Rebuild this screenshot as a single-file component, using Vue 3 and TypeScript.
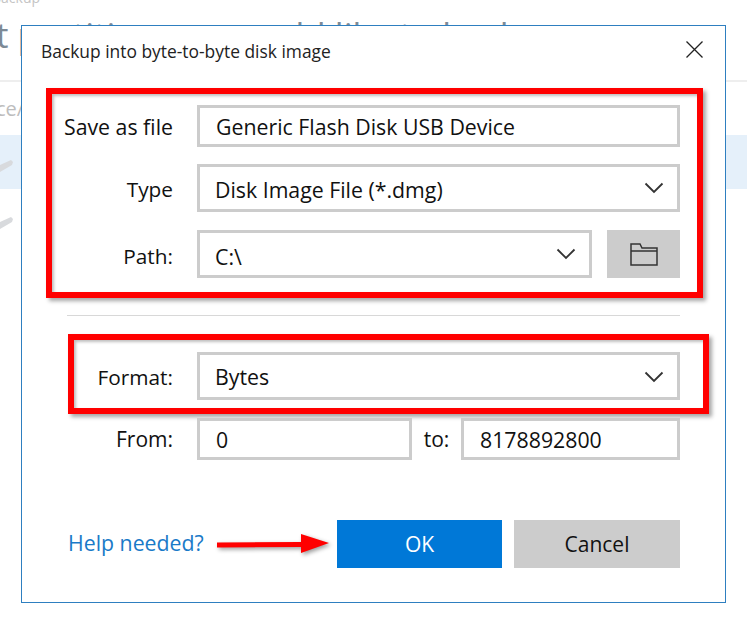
<script setup lang="ts">
const title: string = 'Backup into byte-to-byte disk image'
</script>

<template>
  <div class="page">
    <div class="crumb">Backup</div>
    <div class="heading">t partitions <span class="tight">you</span> would like to back up</div>
    <div class="rule"></div>
    <div class="device">ce/</div>
    <div class="row">
      <svg class="wedge" width="14" height="20" viewBox="0 0 14 20"><path d="M0 13 L11 8 L13 10 L12 13 L0 20 Z" fill="#d8dadd" /></svg>
    </div>
    <div class="row plain">
      <svg class="wedge" width="14" height="20" viewBox="0 0 14 20"><path d="M0 13 L11 8 L13 10 L12 13 L0 20 Z" fill="#d8dadd" /></svg>
    </div>

    <section class="dialog">
      <header class="title-bar">
        <span class="title">{{ title }}</span>
        <svg class="close" width="17" height="17" viewBox="0 0 17 17"><path d="M0.500 0.500 L16.500 16.500 M16.500 0.500 L0.500 16.500" stroke="#222" stroke-width="1.300" fill="none" /></svg>
      </header>

      <div class="callout first">
        <div class="field save">
          <label class="label wide">Save as file</label>
          <div class="input"><span class="indent">Generic Flash Disk USB Device</span></div>
        </div>
        <div class="field type">
          <label class="label">Type</label>
          <div class="input">
            <span class="value">Disk Image File (*.dmg)</span>
            <svg class="chev" width="20" height="12" viewBox="0 0 20 12"><path d="M1.500 1.500 L10 10 L18.500 1.500" stroke="#333" stroke-width="1.800" fill="none" /></svg>
          </div>
        </div>
        <div class="field path">
          <label class="label">Path:</label>
          <div class="input">
            <span class="value">C:\</span>
            <svg class="chev" width="20" height="12" viewBox="0 0 20 12"><path d="M1.500 1.500 L10 10 L18.500 1.500" stroke="#333" stroke-width="1.800" fill="none" /></svg>
          </div>
          <button class="browse">
            <svg width="28" height="23" viewBox="0 0 28 23"><path d="M1 22 V1 H10 L12 5 H27 V22 Z M1 8 H27" stroke="#333" stroke-width="1.500" fill="none" /></svg>
          </button>
        </div>
      </div>

      <div class="separator"></div>

      <div class="callout second">
        <div class="field">
          <label class="label">Format:</label>
          <div class="input">
            <span>Bytes</span>
            <svg class="chev" width="20" height="12" viewBox="0 0 20 12"><path d="M1.500 1.500 L10 10 L18.500 1.500" stroke="#333" stroke-width="1.800" fill="none" /></svg>
          </div>
        </div>
      </div>

      <div class="range">
        <label class="label">From:</label>
        <div class="input from"><span class="indent">0</span></div>
        <label class="to">to:</label>
        <div class="input until"><span class="indent">8178892800</span></div>
      </div>

      <footer class="actions">
        <a class="help">Help needed?</a>
        <svg class="arrow" width="116" height="24" viewBox="0 0 116 24">
          <path d="M1 9.500 L85 9 L85 1 L113 10 L85 20 L85 14 L1 14.500 Z" fill="#f00" />
        </svg>
        <button class="btn ok">OK</button>
        <button class="btn cancel">Cancel</button>
      </footer>
    </section>
  </div>
</template>

<style>
html, body { margin: 0; background: #fff; }
</style>

<style scoped>
.page {
  position: relative;
  width: 747px;
  height: 631px;
  overflow: hidden;
  background: #fff;
  font-family: "Open Sans", "Noto Sans", sans-serif;
  color: #111;
}
.crumb {
  margin-top: -12px;
  margin-left: -8px;
  height: 20px;
  font-size: 14px;
  line-height: 20px;
  color: #c4c4c4;
}
.heading {
  height: 70px;
  font-size: 35px;
  line-height: 46px;
  margin-left: -4px;
  margin-top: 4px;
  margin-bottom: -2px;
  white-space: nowrap;
  color: #7d8a96;
}
.tight { letter-spacing: -9px; }
.rule { height: 2px; background: #eee; }
.device {
  height: 53px;
  padding-top: 14px;
  box-sizing: border-box;
  font-size: 20px;
  line-height: 26px;
  color: #bdbdbd;
  margin-left: -4px;
}
.row {
  height: 54px;
  background: #e5f0fa;
  display: flex;
  align-items: center;
}
.row.plain { background: #fff; }
.row.plain .wedge { margin-top: 6px; }

.dialog {
  position: absolute;
  left: 21px;
  top: 25px;
  width: 705px;
  height: 578px;
  box-sizing: border-box;
  border: 1.5px solid #2e7fc0;
  background: #fff;
}
.title-bar {
  display: flex;
  align-items: center;
  justify-content: space-between;
  height: 49px;
  padding: 0 22px 0 19px;
}
.title { font-size: 17.400px; color: #222; }
.close { display: block; margin-bottom: 2px; }

.callout {
  box-sizing: border-box;
  border: 6px solid #f00;
  box-shadow: 3px 3px 4px rgba(0, 0, 0, 0.35), inset 2px 2px 3px rgba(0, 0, 0, 0.25);
}
.callout.first {
  width: 657px;
  height: 210px;
  margin: 13px 0 0 24px;
  padding: 11px 17px 0 0;
  display: flex;
  flex-direction: column;
}
.callout.second {
  width: 641px;
  height: 80px;
  margin: 18px 0 0 46px;
  padding: 12px 23px 0 0;
}
.separator {
  height: 1px;
  width: 613px;
  margin: 17px 0 0 45px;
  background: #d8d8d8;
}
.field {
  display: flex;
  align-items: center;
  height: 48px;
}
.field.save { height: 42px; }
.field.type { margin-top: 17px; }
.field.path { margin-top: 18px; }
.label {
  flex: none;
  font-size: 20.800px;
  color: #111;
}
.first .label {
  width: 121px;
  text-align: right;
  margin-right: 24px;
}
.first .label.wide { font-size: 21.300px; }
.type .label, .type .value { padding-top: 2px; }
.path .label, .path .value { padding-top: 4px; }
.second .label {
  width: 99px;
  text-align: right;
  margin-right: 24px;
  padding-top: 1px;
}
.input {
  flex: 1;
  box-sizing: border-box;
  height: 100%;
  display: flex;
  align-items: center;
  justify-content: space-between;
  border: 3px solid #ccc;
  padding: 0 13px 0 15px;
  font-size: 21.300px;
  color: #111;
  background: #fff;
}
.second .input { padding-top: 1px; }
.indent { padding-left: 1px; }
.chev { flex: none; }
.browse {
  flex: none;
  width: 73px;
  height: 48px;
  margin-left: 15px;
  background: #ccc;
  border: 0;
  padding: 0;
  display: flex;
  align-items: center;
  justify-content: center;
}
.range {
  display: flex;
  align-items: center;
  height: 42px;
  margin-top: 4px;
  margin-left: 46px;
  width: 612px;
}
.range .label {
  width: 105px;
  text-align: right;
  margin-right: 24px;
  font-size: 21px;
}
.input.from { flex: none; width: 215px; }
.to {
  flex: none;
  width: 49px;
  text-align: center;
  font-size: 21px;
}
.input.until { flex: 1; }
.actions {
  display: flex;
  align-items: center;
  height: 48px;
  margin-top: 60px;
  margin-left: 46px;
  width: 612px;
}
.help {
  flex: none;
  width: 148px;
  font-size: 21.300px;
  color: #1a7ac8;
  padding-bottom: 4px;
}
.arrow {
  flex: none;
  margin-right: 5px;
  margin-top: 2px;
  overflow: visible;
  filter: drop-shadow(2px 2px 2px rgba(0, 0, 0, 0.4));
}
.btn {
  border: 0;
  height: 48px;
  font-family: inherit;
  font-size: 21px;
  padding: 0 0 1px;
}
.ok { width: 165px; background: #0078d7; color: #fff; margin-right: 12px; }
.cancel { flex: 1; background: #ccc; color: #111; }
</style>
